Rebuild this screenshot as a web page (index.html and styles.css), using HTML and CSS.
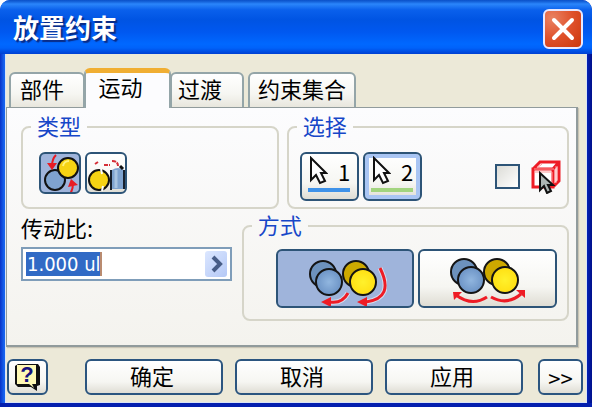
FILE: index.html
```html
<!DOCTYPE html>
<html lang="zh-CN">
<head>
<meta charset="utf-8">
<title>放置约束</title>
<link rel="stylesheet" href="styles.css">
</head>
<body>
<main class="window">
  <header class="titlebar">
    <h1>放置约束</h1>
    <button class="close" aria-label="关闭">
      <svg width="36" height="36" viewBox="2 2 36 36"><path d="M11 11L29 29M29 11L11 29" stroke="#fff" stroke-width="4" stroke-linecap="round"/></svg>
    </button>
  </header>
  <div class="body">
    <nav class="tabs" role="tablist">
      <button class="tab" role="tab">部件</button>
      <button class="tab active" role="tab" aria-selected="true">运动</button>
      <button class="tab tab-third" role="tab">过渡</button>
      <button class="tab tab-wide" role="tab">约束集合</button>
    </nav>
    <section class="panel">
      <div class="row">
        <fieldset class="group type">
          <legend>类型</legend>
          <div class="tools">
            <button class="btn square pressed" aria-label="转动">
              <svg width="38" height="38" viewBox="2 2 38 38">
                <circle cx="16" cy="28" r="10" fill="#7fa3cf" stroke="#111" stroke-width="2"/>
                <circle cx="29" cy="16" r="10" fill="#f6d313" stroke="#111" stroke-width="2"/>
                <path d="M24 14a6 6 0 0 1 6-5" fill="none" stroke="#fff27a" stroke-width="2"/>
                <path d="M17 3q-4 4-4 11M30 43q4-4 4-12" fill="none" stroke="#e81c24" stroke-width="2"/>
                <path d="M8 11l10 0-5 7zM29 35l10-2-7-6z" fill="#e81c24"/>
              </svg>
            </button>
            <button class="btn square" aria-label="转动-平动">
              <svg width="38" height="38" viewBox="2 2 38 38">
                <path d="M27 18q6-4 12 0v19H27z" fill="#7fa3cf"/>
                <path d="M31 18v18" stroke="#a9c4e2" stroke-width="3"/>
                <path d="M26 18v20M39 18v19" stroke="#18202c" stroke-width="2"/>
                <circle cx="14" cy="28" r="10" fill="#f6d313" stroke="#111" stroke-width="2"/>
                <path d="M16 17l1 5M17 39l1-5" stroke="#fff" stroke-width="2"/>
                <path d="M10 12l3-2M19 13h6M27 9q6 0 6 5" fill="none" stroke="#d52e37" stroke-width="2" stroke-dasharray="4 1"/>
                <path d="M35 14l3 3" stroke="#111" stroke-width="3"/>
              </svg>
            </button>
          </div>
        </fieldset>
        <fieldset class="group select">
          <legend>选择</legend>
          <div class="tools picks">
            <button class="btn pick">
              <svg width="20" height="30" viewBox="0 0 20 30"><path d="M3 2v22l5-5 4 8 5-2-4-8h5z" fill="#fff" stroke="#111" stroke-width="2"/></svg>
              <span>1</span><i class="bar blue"></i>
            </button>
            <button class="btn pick focused">
              <svg width="20" height="30" viewBox="0 0 20 30"><path d="M3 2v22l5-5 4 8 5-2-4-8h5z" fill="#fff" stroke="#111" stroke-width="2"/></svg>
              <span>2</span><i class="bar green"></i>
            </button>
            <label class="first">
              <input type="checkbox" aria-label="先拾取零件">
              <svg width="30" height="34" viewBox="0 0 30 34">
                <path d="M2 9h20v18H2zM2 9l7-7h19v19l-6 6M22 9l6-7" fill="#fff" stroke="#ee1c25" stroke-width="3"/>
                <path d="M6 8l5-4M25 6v17M3 9h20M4 12h17v14" fill="none" stroke="#f99" stroke-width="1"/>
                <path d="M9 13v17l4-4 3 7 4-2-3-6h5z" fill="#aeb6b5" stroke="#111" stroke-width="2"/>
              </svg>
            </label>
          </div>
        </fieldset>
      </div>
      <div class="row">
        <div class="ratio">
          <label for="ratio">传动比:</label>
          <div class="field">
            <input id="ratio" type="text" value="1.000 ul">
            <button class="more" aria-label="更多">
              <svg width="22" height="26" viewBox="0 0 22 26"><path d="M8 6l7 7-7 7" fill="none" stroke="#485d87" stroke-width="4"/></svg>
            </button>
          </div>
        </div>
        <fieldset class="group mode">
          <legend>方式</legend>
          <div class="tools modes">
            <button class="btn pressed" aria-label="正向">
              <svg width="84" height="54" viewBox="0 0 84 54">
                <g stroke="#141414" stroke-width="2">
                <circle cx="20" cy="22" r="13" fill="#6d92bd"/><circle cx="26" cy="30" r="13" fill="url(#blue)"/>
                <circle cx="53" cy="22" r="13" fill="#cda900"/><circle cx="60" cy="30" r="13" fill="url(#yellow)"/></g>
                <g fill="none" stroke="#fff" stroke-opacity=".55" stroke-width="5"><path d="M45 41q-6 11-18 9M77 16q15 30-14 34"/></g>
                <g fill="none" stroke="#ee1c25" stroke-width="3"><path d="M45 41q-6 11-18 9M77 16q15 30-14 34"/></g>
                <path d="M18 50l10-5v10zM54 50l10-5v10z" fill="#ee1c25"/>
                <defs>
                  <radialGradient id="blue"><stop offset="0" stop-color="#91b6df"/><stop offset="1" stop-color="#6c93c5"/></radialGradient>
                  <radialGradient id="yellow"><stop offset="0" stop-color="#fff12c"/><stop offset="1" stop-color="#ffdf13"/></radialGradient>
                </defs>
              </svg>
            </button>
            <button class="btn" aria-label="反向">
              <svg width="84" height="54" viewBox="0 0 84 54">
                <g stroke="#141414" stroke-width="2">
                <circle cx="18" cy="20" r="13" fill="#6d92bd"/><circle cx="25" cy="28" r="13" fill="url(#blue)"/>
                <circle cx="51" cy="20" r="13" fill="#cda900"/><circle cx="59" cy="28" r="13" fill="url(#yellow)"/></g>
                <path d="M41 45q-15 10-31-2M45 45q16 9 30-3" fill="none" stroke="#ee1c25" stroke-width="3"/>
                <path d="M7 40h9l-8 8zM70 38h9v8z" fill="#ee1c25"/>
              </svg>
            </button>
          </div>
        </fieldset>
      </div>
    </section>
    <footer class="actions">
      <button class="btn help" aria-label="帮助">
        <svg width="30" height="30" viewBox="0 0 30 30">
          <path d="M5 2h20l2 3v18l-3 1v5l-6-4H5l-3-3V4z" fill="#111"/>
          <path d="M4 3h19v19h-4l2 4-5-4H4z" fill="#fff9b5"/>
          <text class="mark" x="14" y="20" text-anchor="middle">?</text>
        </svg>
      </button>
      <div class="main-actions">
        <button class="btn">确定</button>
        <button class="btn">取消</button>
        <button class="btn">应用</button>
      </div>
      <button class="btn expand">&gt;&gt;</button>
    </footer>
  </div>
</main>
</body>
</html>
```
FILE: styles.css
```css
* { box-sizing: border-box; }
body {
  margin: 0;
  background: #fff;
  color: #000;
  font: 22px/24px "Noto Sans CJK SC", sans-serif;
}
button, input { font: inherit; color: inherit; margin: 0; padding: 0; }
svg { display: block; flex: none; }
.window {
  min-height: 100vh;
  display: flex;
  flex-direction: column;
  padding: 0 5px 5px;
  border-radius: 10px 10px 0 0;
  background: linear-gradient(90deg, #0832c8 0, #1763ee 4px, #1763ee 50%, #0524bd 99%, #00108a);
  box-shadow: inset 0 -5px #041fae;
}
.titlebar {
  height: 54px;
  margin: 0 -5px;
  padding: 4px 9px 0 13px;
  display: flex;
  align-items: center;
  justify-content: space-between;
  border-radius: 10px 10px 0 0;
  background: linear-gradient(#0a50c8 0, #1767de 2px, #2b86fb 4px, #0a60ec 10px, #0054e3 20px, #0058f0 32px, #0068ff 44px, #0062fa 48px, #0040d2 54px);
}
h1 {
  margin: 0;
  padding-bottom: 4px;
  color: #fff;
  font-size: 26px;
  line-height: 32px;
  text-shadow: 2px 2px 1px #092b85;
}
.close {
  width: 40px;
  height: 40px;
  display: grid;
  place-items: center;
  border: 2px solid #e8e8ff;
  border-radius: 6px;
  background: radial-gradient(circle at 20% 20%, #e98263, #df512b 50%, #cb370b);
}
.body {
  flex: 1;
  display: flex;
  flex-direction: column;
  padding: 14px 3px 7px 2px;
  background: #ece9d8;
  border: 1px solid #d9e4f6;
  border-top: 0;
}
.tabs { display: flex; align-items: flex-end; height: 40px; margin: 0 1px -1px; }
.tab {
  width: 76px;
  height: 36px;
  padding: 0 10px 5px 0;
  border: 2px solid #94a5a8;
  border-bottom-width: 1px;
  border-radius: 6px 6px 0 0;
  background: linear-gradient(#fff, #f6f6f2 60%, #e8e6dd);
}
.tab.active {
  position: relative;
  width: 87px;
  height: 40px;
  padding: 0 14px 10px 0;
  margin: 0 -1px;
  border-top: 5px solid #f0ae33;
  border-bottom: 0;
  background: #fcfcfe;
}
.tab-third { width: 74px; padding-right: 14px; }
.tab-wide { width: 108px; margin-left: 4px; padding-right: 0; }
.panel {
  margin: 0 5px 0 -2px;
  padding: 6px 7px 24px 14px;
  border: 1px solid #919b9c;
  border-bottom-width: 2px;
  border-right-width: 2px;
  background: linear-gradient(#fcfcfe, #f4f3ee);
  box-shadow: 1px 1px 1px #c9c5b5;
}
.row { display: flex; align-items: stretch; gap: 8px; }
.row + .row { margin-top: 4px; gap: 10px; }
.group {
  min-width: 0;
  margin: 0;
  padding: 0 0 12px;
  border: 2px solid #d6d5c9;
  border-radius: 8px;
}
.group legend {
  margin-left: 8px;
  padding: 0 6px 4px;
  color: #1646c8;
  line-height: 22px;
}
.type { flex: 257; }
.select { flex: 282; }
.mode { flex: 325; }
.tools { display: flex; gap: 4px; padding: 12px 10px 0 16px; }
.btn {
  display: flex;
  align-items: center;
  justify-content: center;
  border: 2px solid #2d5477;
  border-radius: 6px;
  background: linear-gradient(#fff, #f6f6f2 65%, #dfddd4);
}
.square { width: 42px; height: 42px; }
.pressed { background: #9fb4db; }
.picks { padding: 12px 6px 0 11px; }
.select { padding-bottom: 6px; }
.pick {
  width: 59px;
  height: 49px;
  flex-wrap: wrap;
  align-content: flex-start;
  column-gap: 10px;
  padding-top: 2px;
}
.pick.focused { box-shadow: inset 0 0 0 4px #a9c5f3; }
.bar { width: 42px; height: 4px; margin-top: 2px; }
.blue { background: #3f92e8; }
.green { background: #a2d47e; }
.first { display: flex; align-items: center; gap: 11px; margin-left: auto; }
.first input {
  appearance: none;
  width: 25px;
  height: 25px;
  border: 2px solid #2d5477;
  background: linear-gradient(135deg, #dcdcd7, #fff);
}
.ratio { flex: 212; min-width: 0; padding-top: 2px; }
.ratio label { display: block; margin-bottom: 8px; }
.field {
  display: flex;
  align-items: center;
  height: 34px;
  padding: 0 3px;
  border: 2px solid #7f9db9;
  background: #fff;
}
.field input {
  flex: 1;
  min-width: 0;
  height: 24px;
  border: 0;
  outline: 0;
  padding: 0 1px;
  color: #fff;
  font: 20px/24px "DejaVu Sans Condensed", "DejaVu Sans", sans-serif;
  background: linear-gradient(90deg, #316ac5 74px, #b98b70 74px) no-repeat 0 0 / 76px 24px;
}
.more {
  width: 22px;
  height: 26px;
  border: 0;
  border-radius: 3px;
  background: linear-gradient(135deg, #dce7ff, #b4c8f6);
}
.modes { padding: 10px 10px 0 32px; }
.modes .btn { flex: 1; height: 59px; }
.mode { padding-bottom: 11px; }
.actions { display: flex; align-items: center; margin-top: 12px; }
.actions .btn { height: 36px; border-color: #2b557f; }
.help { width: 41px; margin-left: -1px; }
.mark { font: bold 22px "Liberation Mono", monospace; fill: #16127d; }
.main-actions { flex: 1; display: flex; gap: 12px; margin: 0 15px 0 37px; }
.main-actions .btn { flex: 1; padding: 0 4px 4px 0; }
.expand { width: 45px; }
```
